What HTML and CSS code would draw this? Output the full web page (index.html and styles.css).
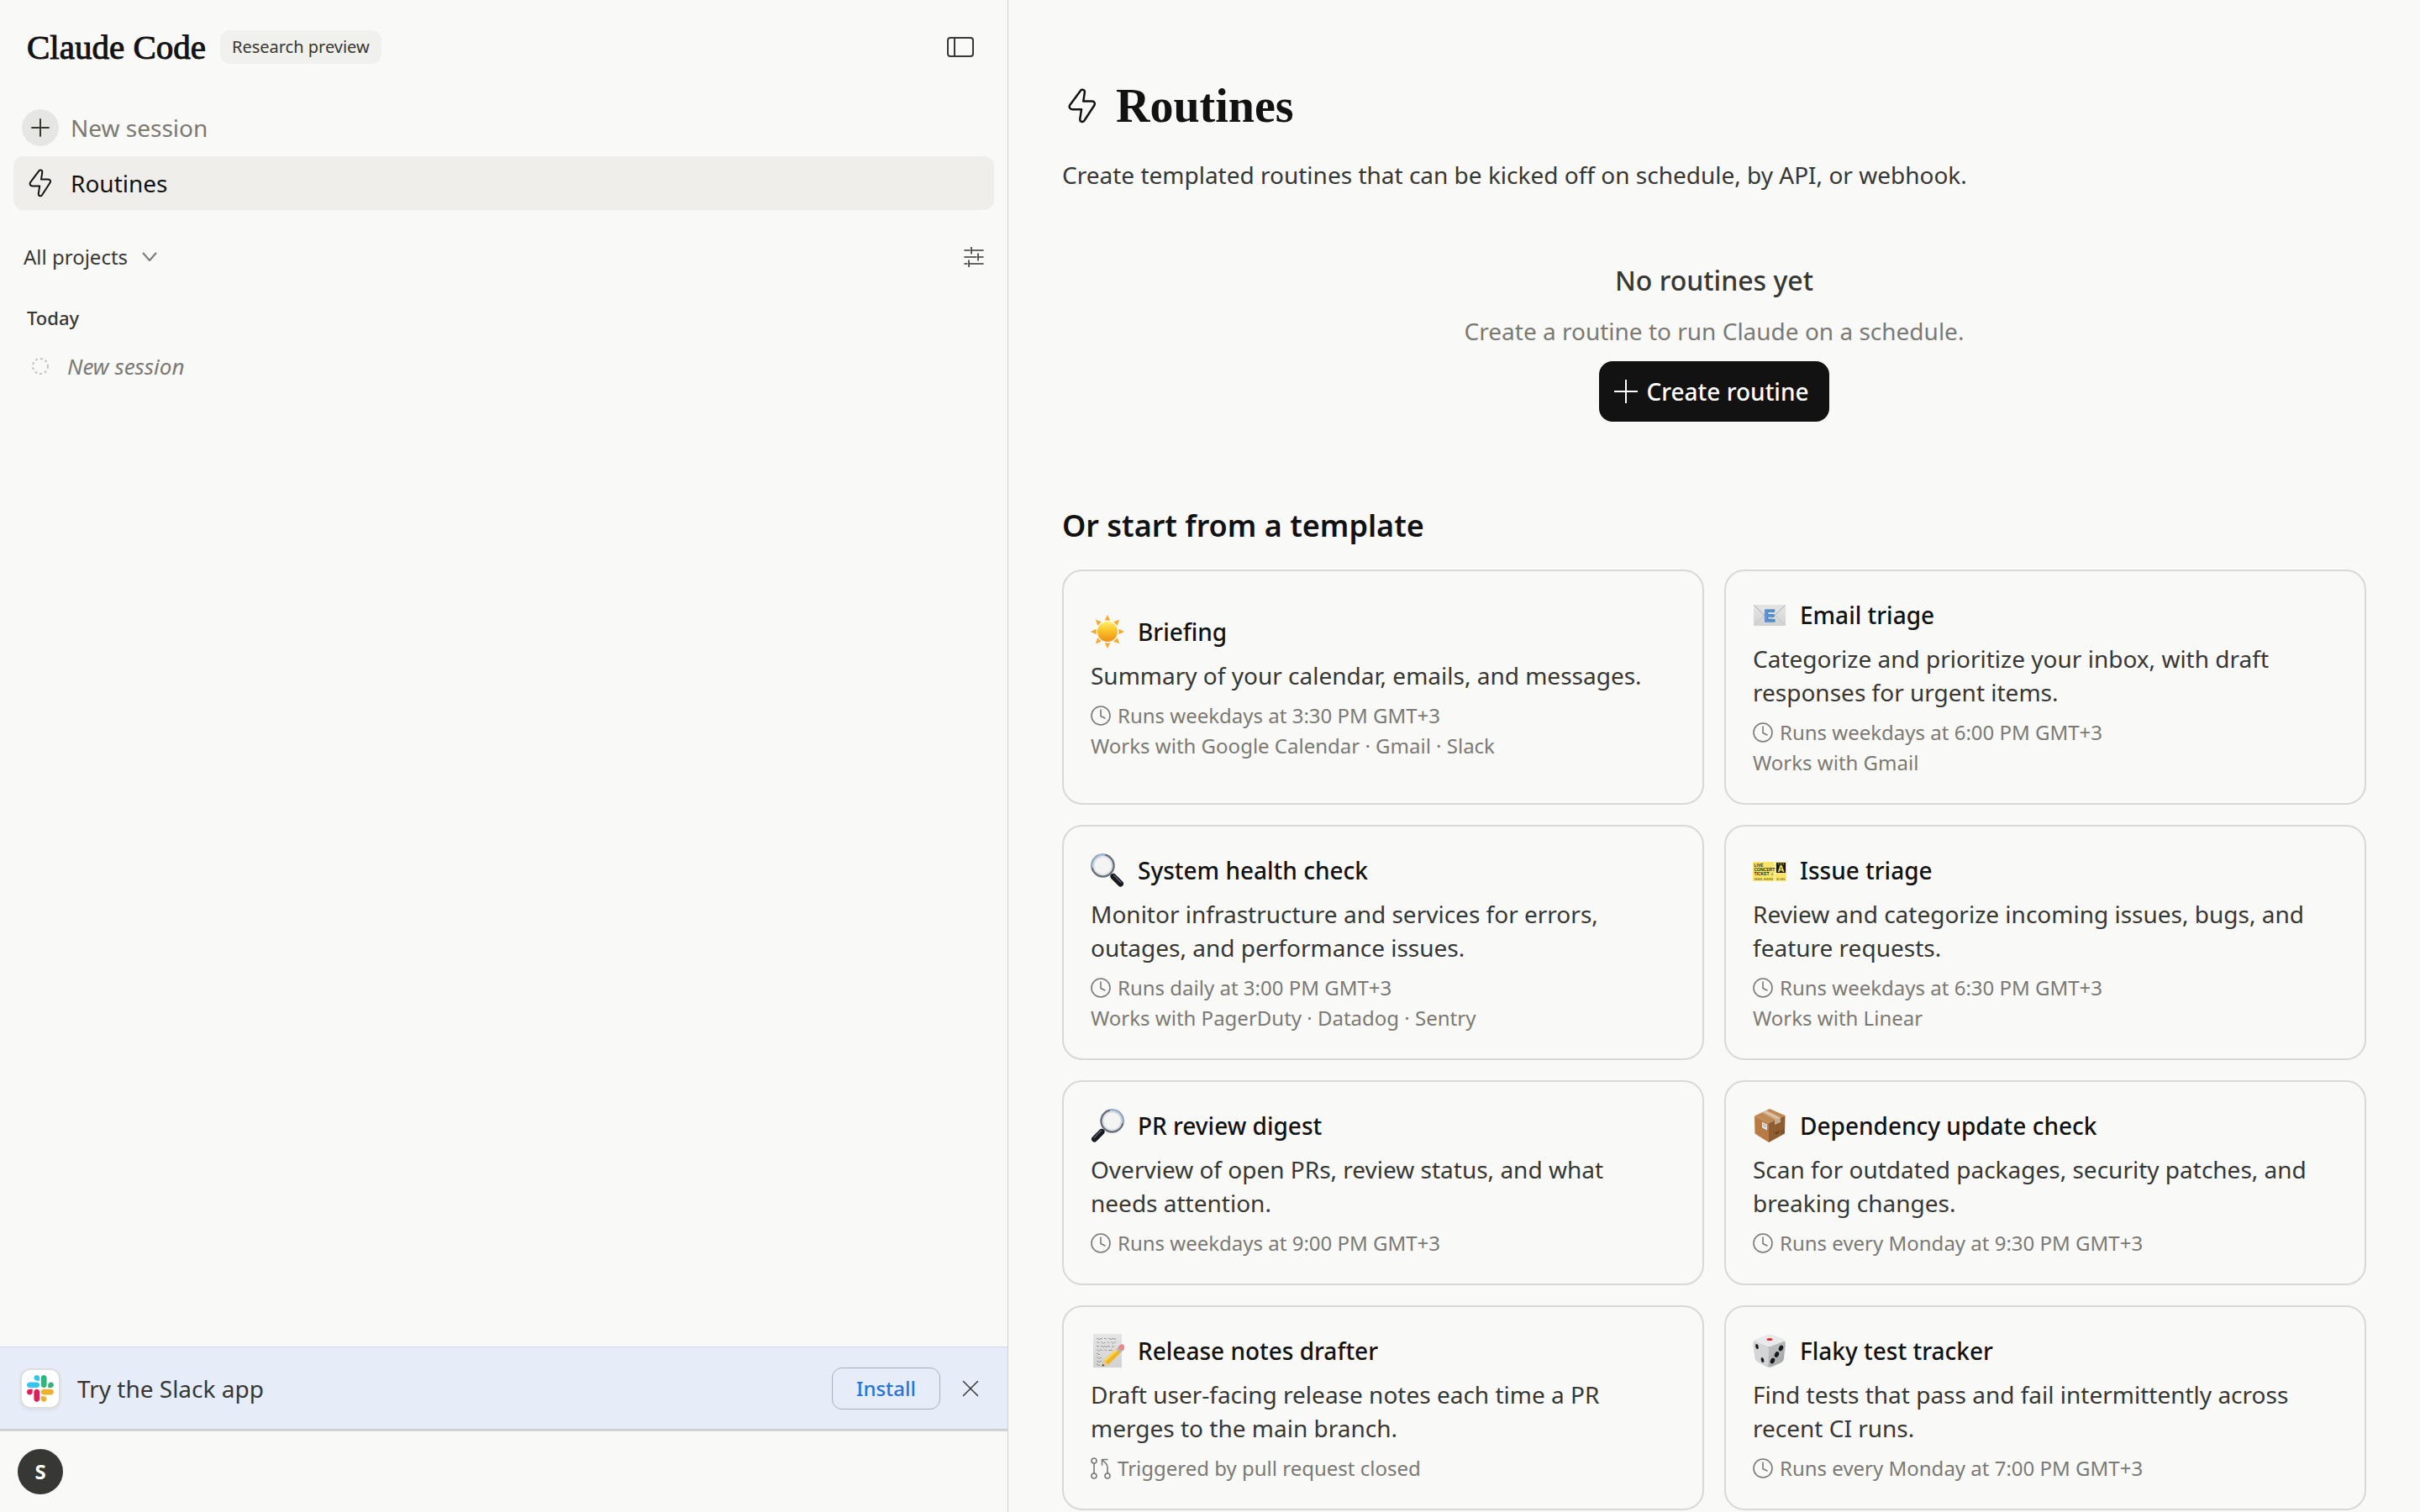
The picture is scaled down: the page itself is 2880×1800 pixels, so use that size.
FILE: index.html
```html
<!DOCTYPE html>
<html lang="en">
<head>
    <meta charset="UTF-8">
    <meta name="viewport" content="width=device-width, initial-scale=1">
    <title>Routines - Claude Code</title>
    <link rel="stylesheet" href="styles.css">
</head>
<body>
    <!-- Shared icons -->
    <svg class="sprite" aria-hidden="true">
        <symbol id="bolt" viewBox="0 0 32 34">
            <path d="M14 2.8C15.2.6 18.7 1.2 18.3 4.2L17 12.6h8.4c2.4 0 3.3 2.2 2 4.2L18 31.2c-1.4 2-4.6 1.2-4.2-1.6l1.4-9.2H6.4c-2.4 0-3.5-2.2-2.3-4.2z"/>
        </symbol>
        <symbol id="clock" viewBox="0 0 24 24">
            <g stroke-width="1.600">
                <circle cx="12" cy="12" r="11"/>
                <path d="M12 5v7.5l5 2.5"/>
            </g>
        </symbol>
        <symbol id="pull-request" viewBox="0 0 24 26">
            <g stroke-width="1.600">
                <circle cx="4" cy="4" r="3"/>
                <circle cx="4" cy="22" r="3"/>
                <circle cx="20" cy="22" r="3"/>
                <path d="M4 7v12M20 19v-7c0-2-.5-3.300-2-5l-4-4M13.500 9V2.500H20"/>
            </g>
        </symbol>
    </svg>

    <div class="app">
        <aside class="sidebar">
            <header class="sidebar-header">
                <span class="brand">Claude Code</span>
                <span class="badge">Research preview</span>
                <button class="icon-btn" aria-label="Toggle sidebar">
                    <svg class="line-icon" width="32" height="24" viewBox="0 0 32 24">
                        <rect x="1" y="1" width="30" height="22" rx="3"/>
                        <path d="M9 1v22"/>
                    </svg>
                </button>
            </header>

            <nav class="nav">
                <a class="nav-item" href="#new">
                    <span class="nav-icon round">
                        <svg class="line-icon" width="24" height="24" viewBox="0 0 24 24"><path d="M12 2v20M2 12h20"/></svg>
                    </span>
                    New session
                </a>
                <a class="nav-item active" href="#routines">
                    <span class="nav-icon">
                        <svg class="line-icon" width="32" height="34"><use href="#bolt"/></svg>
                    </span>
                    Routines
                </a>
            </nav>

            <div class="projects">
                <label class="project-picker">
                    <select aria-label="Project">
                        <option>All projects</option>
                    </select>
                    <svg class="line-icon muted" width="18" height="12" viewBox="0 0 18 12"><path d="M1.500 1.500L9 10l7.500-8.500"/></svg>
                </label>
                <button class="icon-btn small" aria-label="Filter sessions">
                    <svg class="line-icon" width="24" height="24" viewBox="0 0 24 24">
                        <path stroke-width="1.600" d="M1 4h6M9 4h14M9 0v8M1 12h14M17 12h6M17 8v8M1 20h3M6 20h17M6 16v8"/>
                    </svg>
                </button>
            </div>

            <section class="sessions">
                <h2>Today</h2>
                <a class="session" href="#session">
                    <svg class="pending" width="20" height="20" viewBox="0 0 20 20"><circle cx="10" cy="10" r="9"/></svg>
                    New session
                </a>
            </section>

            <div class="promo">
                <span class="app-icon">
                    <svg width="32" height="32" viewBox="0 0 123 123">
                        <path fill="#e01e5a" d="M25.800 77.600c0 7.100-5.800 12.900-12.900 12.900S0 84.700 0 77.600s5.800-12.900 12.900-12.900h12.900zm6.500 0c0-7.100 5.800-12.900 12.900-12.900s12.900 5.800 12.900 12.900v32.300c0 7.100-5.800 12.900-12.900 12.900s-12.900-5.800-12.900-12.900z"/>
                        <path fill="#36c5f0" d="M45.200 25.800c-7.100 0-12.900-5.800-12.900-12.900S38.100 0 45.200 0s12.900 5.800 12.900 12.900v12.900zm0 6.500c7.100 0 12.900 5.800 12.900 12.900s-5.800 12.900-12.900 12.900H12.900C5.800 58.100 0 52.300 0 45.200s5.800-12.900 12.900-12.900z"/>
                        <path fill="#2eb67d" d="M97 45.200c0-7.100 5.800-12.900 12.900-12.900s12.900 5.800 12.900 12.900-5.800 12.900-12.900 12.900H97zm-6.500 0c0 7.100-5.800 12.900-12.900 12.900s-12.900-5.800-12.900-12.900V12.900C64.700 5.800 70.500 0 77.600 0s12.900 5.800 12.900 12.900z"/>
                        <path fill="#ecb22e" d="M77.600 97c7.100 0 12.900 5.800 12.900 12.900s-5.800 12.900-12.900 12.900-12.900-5.800-12.900-12.900V97zm0-6.500c-7.100 0-12.900-5.800-12.900-12.900s5.800-12.900 12.900-12.900h32.300c7.100 0 12.900 5.800 12.900 12.900s-5.800 12.900-12.900 12.900z"/>
                    </svg>
                </span>
                <span class="promo-text">Try the Slack app</span>
                <button class="install">Install</button>
                <button class="icon-btn close" aria-label="Dismiss">
                    <svg class="line-icon" width="20" height="20" viewBox="0 0 20 20"><path stroke-width="1.500" d="M1.500 1.500l17 17M18.500 1.500l-17 17"/></svg>
                </button>
            </div>

            <footer class="account">
                <button class="avatar" aria-label="Account">S</button>
            </footer>
        </aside>

        <main class="main">
            <header class="page-title">
                <svg class="line-icon" width="48" height="42"><use href="#bolt"/></svg>
                <h1>Routines</h1>
            </header>
            <p class="intro">Create templated routines that can be kicked off on schedule, by API, or webhook.</p>

            <section class="empty">
                <h2>No routines yet</h2>
                <p>Create a routine to run Claude on a schedule.</p>
                <button class="create">
                    <svg class="line-icon" width="28" height="28" viewBox="0 0 28 28"><path d="M14 0v28M0 14h28"/></svg>
                    Create routine
                </button>
            </section>

            <h2 class="templates-title">Or start from a template</h2>
            <div class="templates">
                <button class="template">
                    <span class="template-title">
                        <svg width="40" height="40" viewBox="0 0 40 40">
                            <defs>
                                <linearGradient id="sun" x1="0" y1="0" x2="0" y2="1"><stop offset="0" stop-color="#fff06a"/><stop offset=".4" stop-color="#fcc72c"/><stop offset="1" stop-color="#ee8e15"/></linearGradient>
                                <path id="ray" d="M20 0l3.200 6.600h-6.400z"/>
                            </defs>
                            <g fill="#f6a92c">
                                <use href="#ray"/>
                                <use href="#ray" transform="rotate(45 20 20)"/>
                                <use href="#ray" transform="rotate(90 20 20)"/>
                                <use href="#ray" transform="rotate(135 20 20)"/>
                                <use href="#ray" transform="rotate(180 20 20)"/>
                                <use href="#ray" transform="rotate(225 20 20)"/>
                                <use href="#ray" transform="rotate(270 20 20)"/>
                                <use href="#ray" transform="rotate(315 20 20)"/>
                            </g>
                            <circle cx="20" cy="20" r="12" fill="url(#sun)"/>
                        </svg>
                        Briefing
                    </span>
                    <span class="template-desc">Summary of your calendar, emails, and messages.</span>
                    <span class="template-meta"><svg class="line-icon" width="24" height="24"><use href="#clock"/></svg>Runs weekdays at 3:30 PM GMT+3</span>
                    <span class="template-meta">Works with Google Calendar · Gmail · Slack</span>
                </button>

                <button class="template">
                    <span class="template-title">
                        <svg width="40" height="40" viewBox="0 0 40 40">
                            <defs><linearGradient id="paper" x1="0" y1="0" x2="0" y2="1"><stop offset="0" stop-color="#e6e6e6"/><stop offset="1" stop-color="#d2d2d2"/></linearGradient></defs>
                            <rect x="1" y="8" width="38" height="25" rx="1" fill="url(#paper)"/>
                            <path d="M2 32l13-13M38 32L25 19" stroke="#c2c2c2"/>
                            <path d="M1.500 8.500l15.500 15q3 2.500 6 0l15.500-15" fill="#e2e2e2" stroke="#aaa"/>
                            <text x="20" y="28" text-anchor="middle" class="mail-letter">E</text>
                        </svg>
                        Email triage
                    </span>
                    <span class="template-desc">Categorize and prioritize your inbox, with draft responses for urgent items.</span>
                    <span class="template-meta"><svg class="line-icon" width="24" height="24"><use href="#clock"/></svg>Runs weekdays at 6:00 PM GMT+3</span>
                    <span class="template-meta">Works with Gmail</span>
                </button>

                <button class="template">
                    <span class="template-title">
                        <svg width="40" height="40" viewBox="0 0 40 40">
                            <defs>
                                <symbol id="magnifier" viewBox="0 0 40 40">
                                    <path d="M22.500 23.500l3.500 3.500" stroke="#8b949c" stroke-width="3"/>
                                    <path d="M27 27.500l8.500 8.500" stroke="#17191f" stroke-width="7" stroke-linecap="round"/>
                                    <path d="M27.500 26l8.500 8.500" stroke="#5a5f6b" stroke-width="1.500" stroke-linecap="round"/>
                                    <circle cx="14.500" cy="14.500" r="13" fill="#eeeff0" stroke="#66717d" stroke-width="2.500"/>
                                    <path d="M2.500 17A12.500 12.500 0 0 1 17 2" fill="none" stroke="#a6c4e2" stroke-width="2"/>
                                    <circle cx="14.500" cy="14.500" r="10.500" fill="#f4f4f4" stroke="#d5d9dd"/>
                                </symbol>
                            </defs>
                            <use href="#magnifier"/>
                        </svg>
                        System health check
                    </span>
                    <span class="template-desc">Monitor infrastructure and services for errors, outages, and performance issues.</span>
                    <span class="template-meta"><svg class="line-icon" width="24" height="24"><use href="#clock"/></svg>Runs daily at 3:00 PM GMT+3</span>
                    <span class="template-meta">Works with PagerDuty · Datadog · Sentry</span>
                </button>

                <button class="template">
                    <span class="template-title">
                        <svg width="40" height="40" viewBox="0 0 40 40">
                            <path d="M0 10h25l1 1 1-1h13v23H27l-1-1-1 1H0z" fill="#fae567"/>
                            <path d="M26 11v22" stroke="#fff" stroke-width="1.500" stroke-dasharray="2 2"/>
                            <rect x="28" y="11" width="11" height="12" fill="#16160f"/>
                            <g class="ticket-text">
                                <text x="1.500" y="15.500">LIVE</text>
                                <text x="1.500" y="20.500">CONCERT</text>
                                <text x="1.500" y="25.500">TICKET ♫</text>
                            </g>
                            <text x="33.500" y="22" text-anchor="middle" class="ticket-zone">A</text>
                            <path d="M30 12.500h7" stroke="#fae567" stroke-dasharray="1 1"/>
                            <path d="M2 30.500h9M13 30.500h11M28.500 30.500h3M33 30.500h5" stroke="#8b7f35" stroke-width="2" stroke-dasharray="1.500 .5"/>
                        </svg>
                        Issue triage
                    </span>
                    <span class="template-desc">Review and categorize incoming issues, bugs, and feature requests.</span>
                    <span class="template-meta"><svg class="line-icon" width="24" height="24"><use href="#clock"/></svg>Runs weekdays at 6:30 PM GMT+3</span>
                    <span class="template-meta">Works with Linear</span>
                </button>

                <button class="template">
                    <span class="template-title">
                        <svg width="40" height="40" viewBox="0 0 40 40"><use href="#magnifier" transform="matrix(-1 0 0 1 40 0)"/></svg>
                        PR review digest
                    </span>
                    <span class="template-desc">Overview of open PRs, review status, and what needs attention.</span>
                    <span class="template-meta"><svg class="line-icon" width="24" height="24"><use href="#clock"/></svg>Runs weekdays at 9:00 PM GMT+3</span>
                </button>

                <button class="template">
                    <span class="template-title">
                        <svg width="40" height="40" viewBox="0 0 40 40">
                            <path d="M20 0l18.500 8L19 17 2 8.500z" fill="#c08a57"/>
                            <path d="M2 8.500L19 17v23L2.500 29.500z" fill="#b87b45"/>
                            <path d="M38.500 8L19 17v23l19-10.500z" fill="#8f5d2f"/>
                            <path d="M11 4.200l5-2.200 17 8.500-5.500 2.500z" fill="#dcc1a6"/>
                            <path d="M26 13.800l7-3.300v5.500l-7 3z" fill="#c9ad91"/>
                            <path d="M12 3.800l17 8.500" stroke="#c9a886" stroke-width=".7"/>
                            <path d="M11 15.500l6 3v7l-6-3z" fill="#e4e6e8"/>
                            <path d="M12 18l4 2M12 20l4 2" stroke="#a1a7ad"/>
                            <path d="M26 29l3 1 3-4zM34.500 25v5M36.500 24v5" fill="#65401c" stroke="#65401c" stroke-width=".7"/>
                        </svg>
                        Dependency update check
                    </span>
                    <span class="template-desc">Scan for outdated packages, security patches, and breaking changes.</span>
                    <span class="template-meta"><svg class="line-icon" width="24" height="24"><use href="#clock"/></svg>Runs every Monday at 9:30 PM GMT+3</span>
                </button>

                <button class="template">
                    <span class="template-title">
                        <svg width="40" height="40" viewBox="0 0 40 40">
                            <rect x="3" y="0" width="34" height="40" fill="url(#paper)"/>
                            <g fill="none" stroke="#959595">
                                <path d="M7 6q1-2 2 0t2 0 2 0h1m2 0q1-2 2 0h1m2 0q1-2 2 0t2 0 2 0h3"/>
                                <path d="M7 10.500q1-2 2 0h1m2 0q1-2 2 0t2 0h1m2 0q1-2 2 0h1m2 0q1-2 2 0t2 0 2 0"/>
                                <path d="M7 15q1-2 2 0h1m2 0q1-2 2 0t2 0 2 0 2 0 2 0h1m2 0h3"/>
                                <path d="M7 19.500q1-2 2 0t2 0 2 0h1m2 0q1-2 2 0h1m2 0h5"/>
                                <path d="M7 24q1-2 2 0t2 0M7 28.500q1-2 2 0t2 0h2M7 33q1-2 2 0t2 0 2 0M7 37q1-2 2 0t2 0"/>
                            </g>
                            <path d="M32.500 16.500l5 4L21 36.500 13.500 38.500l2-7z" fill="#eeb620"/>
                            <path d="M32.500 16.500l2 1.500L17.500 33l-2-1.500z" fill="#fad75a"/>
                            <path d="M15.500 31.500l5.500 5-7.500 2z" fill="#e8c9a0"/>
                            <path d="M14.300 35.700l2.200 2-3 .8z" fill="#333"/>
                            <path d="M30.500 18.500l3.500-4 5 4.500-4 4z" fill="#b4b8bb"/>
                            <path d="M32.500 16l2-2.500q3-2.500 5 0t-.5 5.500l-1.500 1.500z" fill="#ec8587"/>
                        </svg>
                        Release notes drafter
                    </span>
                    <span class="template-desc">Draft user-facing release notes each time a PR merges to the main branch.</span>
                    <span class="template-meta"><svg class="line-icon" width="24" height="26"><use href="#pull-request"/></svg>Triggered by pull request closed</span>
                </button>

                <button class="template">
                    <span class="template-title">
                        <svg width="40" height="40" viewBox="0 0 40 40">
                            <defs><linearGradient id="die" x1="0" y1="0" x2="1" y2="1"><stop offset="0" stop-color="#d4d5d6"/><stop offset="1" stop-color="#9fa2a4"/></linearGradient></defs>
                            <path d="M17 1.500q3-1 6 0l12 4.500q4 2 4 6l-2 17q-.5 3.500-4 5.500l-10 4.500q-3 1.500-6 0L5.500 33Q3 31.500 2.500 28L.5 12q0-4 3.500-5.500z" fill="url(#die)"/>
                            <path d="M2 8.500L17 15q2 1 2 4l-.5 20L5.500 33Q3 31.500 2.500 28L.5 12q0-2 1.500-3.500z" fill="#d3d5d6"/>
                            <path d="M17 1.500q3-1 6 0l12 4.500q2.500 1 3 2.500L22 14.500q-3 1-6 0L2 8.500q.5-1.500 2-2z" fill="#e9eaeb"/>
                            <ellipse cx="20" cy="6.500" rx="3.500" ry="1.600" fill="#e62420"/>
                            <g fill="#17181a">
                                <ellipse cx="5" cy="15" rx="1.700" ry="3" transform="rotate(-15 5 15)"/>
                                <ellipse cx="11.500" cy="31" rx="1.700" ry="3" transform="rotate(-15 11.500 31)"/>
                                <ellipse cx="33.500" cy="17" rx="2.500" ry="3.500" transform="rotate(25 33.500 17)"/>
                                <ellipse cx="28.500" cy="24.500" rx="2.500" ry="3.500" transform="rotate(25 28.500 24.500)"/>
                                <ellipse cx="23.500" cy="32" rx="2.500" ry="3.500" transform="rotate(25 23.500 32)"/>
                            </g>
                        </svg>
                        Flaky test tracker
                    </span>
                    <span class="template-desc">Find tests that pass and fail intermittently across recent CI runs.</span>
                    <span class="template-meta"><svg class="line-icon" width="24" height="24"><use href="#clock"/></svg>Runs every Monday at 7:00 PM GMT+3</span>
                </button>
            </div>
        </main>
    </div>
</body>
</html>
```
FILE: styles.css
```css
* {
    margin: 0;
    padding: 0;
    box-sizing: border-box;
}

body {
    font-family: 'Noto Sans', sans-serif;
    font-size: 28px;
    line-height: 40px;
    color: #373734;
    background: #f9f9f7;
}

button,
select {
    font: inherit;
    color: inherit;
    background: none;
    border: none;
    cursor: pointer;
}

a {
    color: inherit;
    text-decoration: none;
}

svg {
    flex-shrink: 0;
}

.sprite {
    position: absolute;
    width: 0;
    height: 0;
}

.line-icon {
    fill: none;
    stroke: currentColor;
    stroke-width: 2;
    stroke-linecap: round;
    stroke-linejoin: round;
}

.line-icon.muted {
    color: #7b7974;
}

.app {
    display: grid;
    grid-template-columns: 5fr 7fr;
    height: 100vh;
}

/* Sidebar */
.sidebar {
    display: flex;
    flex-direction: column;
    border-right: 1px solid #d1d1ce;
    min-width: 0;
}

.sidebar-header {
    display: flex;
    align-items: center;
    padding: 16px 32px;
    height: 112px;
}

.brand {
    font-family: 'Liberation Serif', serif;
    font-size: 41px;
    color: #121212;
    -webkit-text-stroke: 1px #121212;
}

.badge {
    margin-left: 17px;
    padding: 0 14px;
    border-radius: 12px;
    background: #f0f0ec;
    font-size: 20px;
}

.icon-btn {
    display: flex;
    align-items: center;
    justify-content: center;
    width: 48px;
    height: 48px;
    margin-left: auto;
}

.icon-btn.small {
    width: 24px;
}

.nav {
    display: flex;
    flex-direction: column;
    gap: 2px;
    padding: 8px 16px;
}

.nav-item {
    display: flex;
    align-items: center;
    gap: 14px;
    height: 64px;
    padding: 0 10px;
    border-radius: 12px;
    color: #7b7974;
}

.nav-item.active {
    background: #efeeeb;
    color: #121212;
}

.nav-icon {
    display: flex;
    align-items: center;
    justify-content: center;
    width: 44px;
    height: 44px;
    border-radius: 50%;
}

.nav-icon.round {
    background: #e6e6e2;
    color: #373734;
}

.projects {
    display: flex;
    align-items: center;
    justify-content: space-between;
    height: 96px;
    padding: 0 28px;
    font-size: 24px;
}

.project-picker {
    display: flex;
    align-items: center;
    gap: 16px;
}

.project-picker select {
    appearance: none;
}

.sessions {
    flex: 1;
    padding: 4px 32px;
}

.sessions h2 {
    font-size: 22px;
    font-weight: 500;
}

.session {
    display: flex;
    align-items: center;
    gap: 22px;
    height: 64px;
    margin-top: 6px;
    padding: 0 6px;
    font-size: 26px;
    font-style: italic;
    color: #7b7974;
}

.pending {
    fill: none;
    stroke: #c4c4c0;
    stroke-width: 2;
    stroke-dasharray: 3 3;
}

.promo {
    display: flex;
    align-items: center;
    height: 99px;
    padding: 0 24px;
    background: #e6edf8;
    border-top: 1px solid #cfd8e4;
    border-bottom: 1px solid #c3cad6;
}

.app-icon {
    display: flex;
    align-items: center;
    justify-content: center;
    width: 48px;
    height: 48px;
    border: 2px solid #dededc;
    border-radius: 12px;
    background: #fff;
    box-shadow: 0 2px 4px rgba(0, 0, 0, 0.06);
}

.promo-text {
    flex: 1;
    padding-left: 20px;
}

.install {
    height: 50px;
    padding: 0 28px;
    border: 1px solid #a9afb8;
    border-radius: 12px;
    color: #2775d8;
    font-size: 24px;
    font-weight: 500;
}

.close {
    width: 40px;
    margin-left: 16px;
}

.account {
    display: flex;
    align-items: center;
    height: 98px;
    padding: 0 21px;
    border-top: 2px solid #d6d6d4;
}

.avatar {
    width: 54px;
    height: 54px;
    border-radius: 50%;
    background: #373734;
    color: #fff;
    font-size: 24px;
    font-weight: 700;
}

/* Main column */
.main {
    min-width: 0;
    padding: 94px 64px 0;
    overflow-y: auto;
}

.page-title {
    display: flex;
    align-items: center;
    gap: 16px;
    height: 64px;
    color: #121212;
}

.page-title h1 {
    font-family: 'Liberation Serif', serif;
    font-size: 56px;
    font-weight: 700;
}

.intro {
    margin-top: 30px;
}

.empty {
    display: flex;
    flex-direction: column;
    align-items: center;
    padding: 86px 0 100px;
}

.empty h2 {
    margin-bottom: 20px;
    font-size: 32px;
    font-weight: 500;
}

.empty p {
    color: #7b7974;
}

.create {
    display: flex;
    align-items: center;
    gap: 10px;
    height: 72px;
    margin-top: 16px;
    padding: 0 24px 0 18px;
    border-radius: 16px;
    background: #121212;
    color: #fff;
    font-weight: 500;
}

.templates-title {
    margin-bottom: 28px;
    font-size: 36px;
    font-weight: 600;
    line-height: 48px;
    color: #121212;
}

.templates {
    display: grid;
    grid-template-columns: 1fr 1fr;
    gap: 24px;
}

.template {
    display: flex;
    flex-direction: column;
    justify-content: center;
    padding: 32px 32px 30px;
    border: 2px solid #d8d8d5;
    border-radius: 24px;
    text-align: left;
}

.template-title {
    display: flex;
    gap: 16px;
    margin-bottom: 12px;
    font-weight: 500;
    color: #121212;
}

.template-desc {
    margin-bottom: 10px;
}

.template-meta {
    display: flex;
    align-items: center;
    gap: 8px;
    font-size: 24px;
    line-height: 36px;
    color: #7b7974;
}

/* Lettering inside the drawn emoji */
.mail-letter {
    font: 700 20px 'Liberation Sans', sans-serif;
    fill: #5ba4ee;
    stroke: #3b76bb;
}

.ticket-text {
    font: 700 5px 'Liberation Sans', sans-serif;
    fill: #2b2818;
}

.ticket-zone {
    font: 700 11px 'Liberation Sans', sans-serif;
    fill: #fae567;
}
```
